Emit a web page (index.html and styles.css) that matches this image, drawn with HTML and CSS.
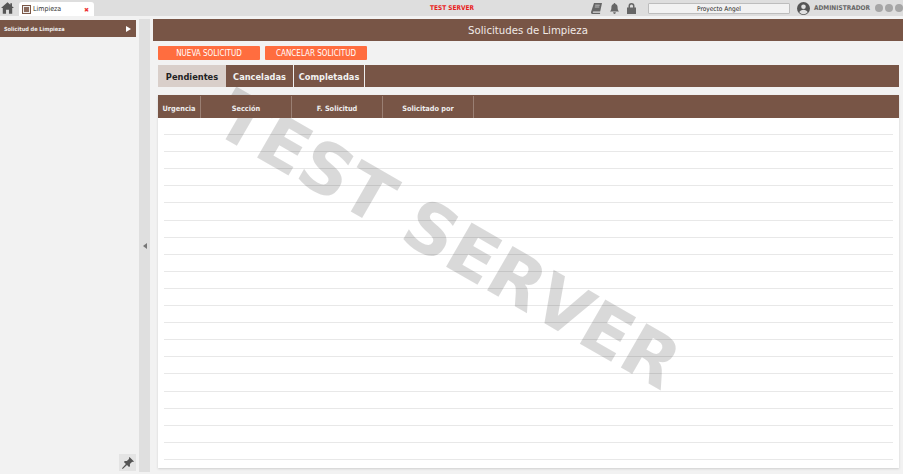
FILE: index.html
```html
<!DOCTYPE html>
<html lang="es">
<head>
<meta charset="utf-8">
<title>Limpieza</title>
<link rel="stylesheet" href="styles.css">
</head>
<body>
<div class="app">
  <header class="topbar">
    <svg class="home" viewBox="0 0 16 14" width="13" height="12"><path d="M8 0 0 7h2.200v7h4V9.200h3.600V14h4V7H16l-2.500-2.200V1h-2v2Z" fill="#555"/></svg>
    <div class="tab">
      <span class="tab-icon"><span></span></span>
      <span class="tab-label">Limpieza</span>
      <span class="tab-close">✖</span>
    </div>
    <div class="server">TEST SERVER</div>
    <div class="tools">
      <svg width="11" height="11" viewBox="0 0 11 11"><path d="M3 0h8L9.200 8.500H2.400c-.8 0-.8 1.300 0 1.300h6.800l-.2 1.200H1.500C.3 11-.2 10 .1 8.800Z" fill="#666"/><path d="M4.200 2.200h4.500M3.800 4h4.500" stroke="#ddd" stroke-width=".7"/></svg>
      <svg width="9" height="11" viewBox="0 0 9 11"><path d="M4.500 0c.6 0 .9.400.9 1C7 1.400 7.600 2.800 7.600 4.500c0 2 .5 3 1.400 4H0c.9-1 1.400-2 1.400-4C1.400 2.800 2 1.400 3.600 1c0-.6.300-1 .9-1ZM3.200 9.300h2.600c0 1-.6 1.700-1.300 1.700s-1.300-.7-1.300-1.700Z" fill="#666"/></svg>
      <svg width="9" height="11" viewBox="0 0 9 11"><path d="M1.500 4.500V3a3 3 0 0 1 6 0v1.500H9V11H0V4.500Zm1.500 0h3V3a1.500 1.500 0 0 0-3 0Z" fill="#666"/></svg>
    </div>
    <div class="project">Proyecto Angel</div>
    <svg class="user" width="13" height="13" viewBox="0 0 13 13"><circle cx="6.500" cy="6.500" r="6.500" fill="#555"/><circle cx="6.500" cy="4.800" r="2.300" fill="#e0e0e0"/><path d="M2.300 10.300c.6-1.800 2.300-2.600 4.200-2.600s3.600.8 4.200 2.600a5.500 5.500 0 0 1-8.400 0Z" fill="#e0e0e0"/></svg>
    <div class="username">ADMINISTRADOR</div>
    <div class="dots"><i></i><i></i><i></i></div>
  </header>
  <div class="body">
    <aside class="sidebar">
      <div class="side-item"><span>Solicitud de Limpieza</span><b class="side-arrow"></b></div>
      <div class="pin-box">
        <svg width="12" height="12" viewBox="0 0 12 12"><path d="M7.500 0 12 4.500l-1 .6-.8-.3-2.300 2.300.1 2.100-1 .9-2-2L.7 12 0 11.300 3.900 7 1.900 5l.9-1 2.100.1 2.300-2.300-.3-.8Z" fill="#555"/></svg>
      </div>
    </aside>
    <div class="splitter"><b class="split-arrow"></b></div>
    <main class="content">
      <h1 class="title">Solicitudes de Limpieza</h1>
      <div class="actions">
        <button class="action">NUEVA SOLICITUD</button>
        <button class="action">CANCELAR SOLICITUD</button>
      </div>
      <nav class="tabs">
        <span class="tabs-item active">Pendientes</span>
        <span class="tabs-item t2">Canceladas</span>
        <span class="tabs-item t3">Completadas</span>
      </nav>
      <section class="card">
        <div class="thead">
          <div class="th c1">Urgencia</div>
          <div class="th c2">Sección</div>
          <div class="th c2">F. Solicitud</div>
          <div class="th c2">Solicitado por</div>
        </div>
        <div class="rows">
          <div class="row"></div><div class="row"></div><div class="row"></div><div class="row"></div>
          <div class="row"></div><div class="row"></div><div class="row"></div><div class="row"></div>
          <div class="row"></div><div class="row"></div><div class="row"></div><div class="row"></div>
          <div class="row"></div><div class="row"></div><div class="row"></div><div class="row"></div>
          <div class="row"></div><div class="row"></div><div class="row"></div><div class="row"></div>
        </div>
      </section>
    </main>
  </div>
  <div class="watermark">TEST SERVER</div>
</div>
</body>
</html>
```
FILE: styles.css
```css
* { box-sizing: border-box; }
html, body { margin: 0; height: 100%; overflow: hidden; }
body { font-family: "DejaVu Sans", sans-serif; font-stretch: condensed; background: #f2f2f2; color: #333; }
.app { position: relative; width: 903px; height: 474px; overflow: hidden; background: #f2f2f2; }

.topbar { display: flex; align-items: center; height: 16px; background: #dedede; position: relative; }
.home { margin: 0 0 0 1px; flex: none; }
.tab { display: flex; align-items: center; align-self: flex-end; width: 75px; height: 14px; margin-left: 5px; padding: 0 4px 0 3px; background: #fff; border-radius: 3px 3px 0 0; }
.tab-icon { display: flex; align-items: center; justify-content: center; width: 9px; height: 9px; border: 1px solid #7a5646; background: #eee; }
.tab-icon span { width: 5px; height: 5px; background: #8a6a5c; }
.tab-label { margin-left: 2px; font-size: 7px; color: #333; flex: 1; }
.tab-close { font-size: 6px; color: #ee3333; margin-right: 1px; font-stretch: normal; }
.server { position: absolute; left: 430px; top: 3px; font-weight: bold; font-size: 6.500px; line-height: 10px; color: #e81c1c; }
.tools { display: flex; align-items: center; gap: 8px; margin-left: auto; }
.project { width: 142px; height: 11px; margin-left: 12px; background: #f2f2f2; border: 1px solid #bdbdbd; border-radius: 1px; text-align: center; font-size: 6.500px; line-height: 10px; color: #222; }
.user { margin-left: 7px; flex: none; }
.username { margin-left: 4px; font-weight: bold; font-size: 6.500px; color: #666; }
.dots { display: flex; gap: 2px; margin: 0 0 0 5px; width: 28px; flex: none; }
.dots i { width: 8px; height: 8px; flex: none; border-radius: 50%; background: #a6a6a6; }

.body { display: flex; height: 458px; padding-top: 3px; }
.sidebar { position: relative; width: 136px; flex: none; }
.side-item { display: flex; align-items: center; justify-content: space-between; height: 17px; padding: 0 5px 0 4px; margin-top: 1px; background: #785546; color: #eee; font-weight: bold; font-size: 5.600px; }
.side-arrow { width: 0; height: 0; border-left: 5px solid #fff; border-top: 3.500px solid transparent; border-bottom: 3.500px solid transparent; }
.pin-box { position: absolute; left: 119px; bottom: 3px; width: 17px; height: 17px; display: flex; align-items: center; justify-content: center; background: #e4e4e4; }
.splitter { display: flex; align-items: center; justify-content: center; width: 11px; height: 453px; margin-left: 3px; background: #dfdfdf; flex: none; }
.split-arrow { width: 0; height: 0; border-right: 4px solid #777; border-top: 3px solid transparent; border-bottom: 3px solid transparent; }

.content { flex: none; width: 750px; margin-left: 3px; display: flex; flex-direction: column; }
.title { margin: 0; height: 22px; background: #785546; color: #f0eae6; text-align: center; font-size: 11.300px; line-height: 23px; font-weight: 400; }
.actions { display: flex; gap: 5px; padding: 5px 0 0 5px; }
.action { width: 102px; height: 14px; padding: 2px 0 0; border: 0; border-radius: 1px; background: #ff6d3f; color: #fff; font-family: inherit; font-stretch: condensed; font-size: 8px; line-height: 12px; }
.tabs { position: relative; z-index: 2; display: flex; margin: 5px 4px 0 5px; height: 22px; background: #785546; }
.tabs-item { display: flex; align-items: center; justify-content: center; height: 22px; border-right: 1px solid #eee; color: #f2f2f2; font-weight: bold; font-size: 9.200px; width: 68px; }
.tabs-item.active { background: #d9cfca; color: #222; border-right: 0; }
.tabs-item.t2 { width: 68px; }
.tabs-item.t3 { width: 71px; }

.card { margin: 8px 4px 0 5px; height: 373px; background: #fff; box-shadow: 0 1px 2px #cfcfcf; }
.thead { position: relative; z-index: 2; display: flex; height: 23px; padding-top: 1px; background: #785546; }
.th { display: flex; align-items: center; justify-content: center; height: 22px; padding-top: 2px; border-right: 1px solid #9a7f73; color: #eee; font-weight: bold; font-size: 7.300px; }
.c1 { width: 43px; }
.c2 { width: 91px; }
.rows { position: relative; z-index: 2; padding: 0 6px; }
.row { height: 17.100px; border-bottom: 1px solid rgba(0, 0, 0, .09); }

.watermark { position: absolute; z-index: 1; left: 148px; top: 200px; width: 600px; text-align: center; transform: rotate(30deg); font-size: 70px; line-height: 80px; font-weight: bold; font-stretch: normal; letter-spacing: -0.500px; color: rgba(0, 0, 0, .15); pointer-events: none; white-space: nowrap; }
```
